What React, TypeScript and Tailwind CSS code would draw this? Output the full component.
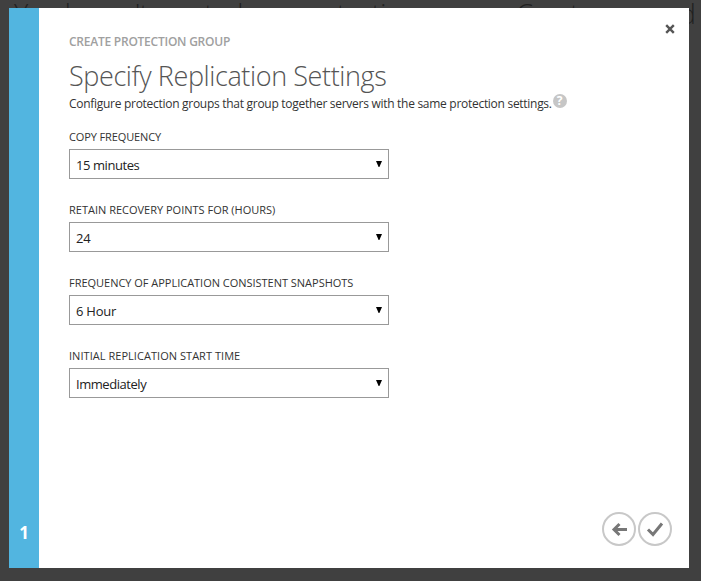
import React from "react";

const fields = [
  { label: "COPY FREQUENCY", value: "15 minutes", ls: "tracking-[-0.12px]", vls: "tracking-[-0.43px]" },
  { label: "RETAIN RECOVERY POINTS FOR (HOURS)", value: "24", ls: "tracking-[0px]", vls: "tracking-[-0.2px]" },
  { label: "FREQUENCY OF APPLICATION CONSISTENT SNAPSHOTS", value: "6 Hour", ls: "tracking-[-0.02px]", vls: "tracking-[-0.25px]" },
  { label: "INITIAL REPLICATION START TIME", value: "Immediately", ls: "tracking-[0.04px]", vls: "tracking-[-0.45px]" },
];

export default function App() {
  return (
    <div className="relative h-[581px] w-[701px] overflow-hidden bg-[#404040] pl-[9px] pt-[8px] font-['Open_Sans','Noto_Sans',sans-serif]">
      <div className="absolute left-[14px] top-[-6px] whitespace-nowrap text-[27px] font-light leading-[40px] tracking-[-0.6px] text-[#202020]">
        You haven't created any protection groups. Create one and
      </div>
      <div className="relative flex h-[560px] w-[680px] bg-white">
        <aside className="flex w-[30px] flex-col items-center justify-end bg-[#52b5e0] pb-[23px]">
          <span className="text-[17px] font-bold leading-[24px] text-white">1</span>
        </aside>
        <main className="flex flex-1 flex-col pl-[30px]">
          <div className="flex h-[50px] justify-between pr-[14px]">
            <h2 className="mt-[26px] whitespace-nowrap text-[12px] font-semibold leading-[16px] tracking-[-0.24px] text-[#a0a0a0]">CREATE PROTECTION GROUP</h2>
            <button aria-label="Close" className="mt-[16px] h-[10px] w-[10px]">
              <svg width="10" height="10" viewBox="0 0 10 10" className="block" stroke="#555" strokeWidth="2.4"><path d="M1.2 1.2 8.8 8.8M8.8 1.2 1.2 8.8" /></svg>
            </button>
          </div>
          <h1 className="whitespace-nowrap text-[27px] font-light leading-[36px] tracking-[-0.4px] text-[#555]">Specify Replication Settings</h1>
          <div className="flex h-[18px] items-start">
            <p className="whitespace-nowrap pt-px text-[12px] leading-[18px] tracking-[-0.285px] text-[#333]">Configure protection groups that group together servers with the same protection settings.</p>
            <span className="ml-[1px] flex h-[14px] w-[14px] items-center justify-center rounded-full bg-[#c6c6c6] text-[12px] font-bold leading-none text-white">?</span>
          </div>
          <form className="mt-[17px] flex flex-col gap-[23px]">
            {fields.map((f) => (
              <label key={f.label} className="flex h-[50px] w-[320px] flex-col">
                <span className={`h-[20px] whitespace-nowrap text-[11px] leading-[16px] text-[#333] ${f.ls}`}>{f.label}</span>
                <span className="flex h-[30px] shrink-0 items-center justify-between border border-[#999] pl-[6px] pr-[6px]">
                  <span className={`pt-[2px] text-[13px] leading-[18px] text-[#222] ${f.vls}`}>{f.value}</span>
                  <svg width="6" height="6" viewBox="0 0 6 6" className="block"><path d="M0 0h6L3.4 6h-.8z" fill="#000" /></svg>
                </span>
              </label>
            ))}
          </form>
          <div className="mb-[22px] mr-[17px] mt-auto flex justify-end gap-[2px]">
            <button aria-label="Back"><svg width="34" height="34" viewBox="0 0 34 34" fill="none" className="block"><circle cx="17" cy="17" r="16" stroke="#c8c8c8" strokeWidth="2" /><path d="M25 17.5H12M17.5 12 12 17.5 17.5 23" stroke="#777" strokeWidth="3" /></svg></button>
            <button aria-label="Complete"><svg width="34" height="34" viewBox="0 0 34 34" fill="none" className="block"><circle cx="17" cy="17" r="16" stroke="#c8c8c8" strokeWidth="2" /><path d="M10 17.5 15 22.5 24 11.5" stroke="#777" strokeWidth="3" /></svg></button>
          </div>
        </main>
      </div>
    </div>
  );
}
